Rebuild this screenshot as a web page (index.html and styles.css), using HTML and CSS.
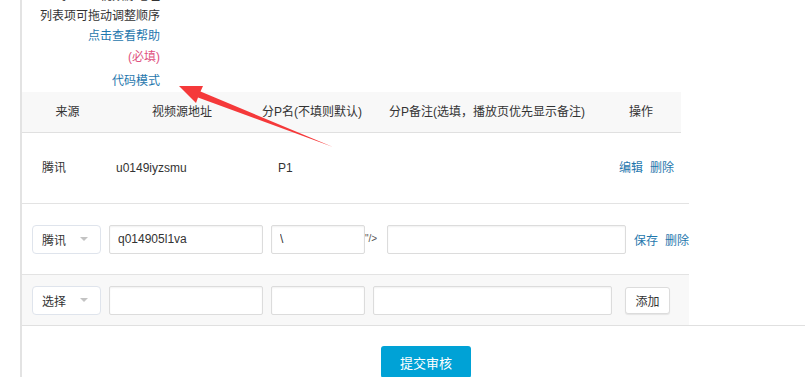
FILE: index.html
```html
<!DOCTYPE html>
<html lang="zh">
<head>
    <meta charset="UTF-8">
    <title>视频源</title>
    <link rel="stylesheet" href="styles.css">
</head>
<body>
    <div class="page">
        <div class="labels">
            <div class="label">每P一个视频源地址</div>
            <div class="label">列表项可拖动调整顺序</div>
            <div class="label link">点击查看帮助</div>
            <div class="label required">(必填)</div>
            <div class="label link mode">代码模式</div>
        </div>

        <div class="thead">
            <div class="th c1">来源</div>
            <div class="th c2">视频源地址</div>
            <div class="th c3">分P名(不填则默认)</div>
            <div class="th c4">分P备注(选填，播放页优先显示备注)</div>
            <div class="th c5">操作</div>
        </div>

        <div class="row data">
            <div class="td d1">腾讯</div>
            <div class="td d2">u0149iyzsmu</div>
            <div class="td d3">P1</div>
            <div class="td d4"><a class="act">编辑</a><a class="act">删除</a></div>
        </div>

        <div class="row edit">
            <div class="select"><span>腾讯</span><i class="caret"></i></div>
            <input class="field f-url" value="q014905l1va">
            <input class="field f-name" value="\">
            <span class="junk">"/&gt;</span>
            <input class="field f-note">
            <a class="act">保存</a><a class="act">删除</a>
        </div>

        <div class="add-wrap">
            <div class="row add">
                <div class="select"><span>选择</span><i class="caret"></i></div>
                <input class="field f-url">
                <input class="field f-name">
                <input class="field f-note2">
                <button class="add-btn">添加</button>
            </div>
        </div>

        <div class="submit-row">
            <button class="submit">提交审核</button>
        </div>

        <svg class="arrow" width="805" height="377" viewBox="0 0 805 377">
            <polygon points="179,86 203,86 200.5,91.5 333,147 198,97.5 196,103" fill="#f5393a"/>
        </svg>
    </div>
</body>
</html>
```

FILE: styles.css
```css
html, body {
    height: 100%;
}

body {
    margin: 0;
    font-family: "Liberation Sans", "Noto Sans CJK SC", sans-serif;
    font-size: 12px;
    color: #333;
    overflow: hidden;
}

.page {
    position: relative;
    display: flow-root;
    margin-left: 20px;
    border-left: 2px solid #e3e3e3;
    height: 100%;
}

.labels {
    width: 138px;
    margin-top: -14px;
    text-align: right;
}

.label {
    height: 20px;
    line-height: 20px;
}

.link {
    color: #1f77ad;
}

.required {
    color: #e0517f;
    margin-top: 1px;
}

.mode {
    margin-top: 4px;
}

.thead {
    display: flex;
    width: 659px;
    height: 40px;
    margin-top: 1px;
    background: #f8f8f8;
    border-bottom: 1px solid #e0e0e0;
}

.th {
    line-height: 40px;
    text-align: center;
}

.c1 { width: 91px; }
.c2 { width: 138px; }
.c3 { width: 122px; }
.c4 { width: 228px; }
.c5 { width: 80px; }

.row {
    display: flex;
    align-items: center;
    width: 667px;
    border-bottom: 1px solid #e3e3e3;
    white-space: nowrap;
}

.row > * {
    flex-shrink: 0;
}

.data {
    height: 70px;
}

.td {
    line-height: 20px;
}

.d1 { width: 74px; padding-left: 20px; }
.d2 { width: 162px; }
.d3 { width: 341px; }

.act {
    color: #1f77ad;
    margin-right: 7px;
    cursor: pointer;
}

.edit {
    height: 70px;
    padding-left: 10px;
    width: 657px;
}

.select {
    display: flex;
    align-items: center;
    box-sizing: border-box;
    width: 69px;
    height: 29px;
    padding-left: 9px;
    margin-right: 8px;
    border: 1px solid #dfe4ec;
    border-radius: 4px;
    background: #fff;
}

.select span {
    width: 38px;
}

.caret {
    width: 0;
    height: 0;
    border-left: 4px solid transparent;
    border-right: 4px solid transparent;
    border-top: 4px solid #c3c3c3;
}

.field {
    box-sizing: border-box;
    height: 29px;
    padding: 0 8px;
    margin: 0 8px 0 0;
    border: 1px solid #dcdcdc;
    border-radius: 2px;
    box-shadow: inset 0 1px 2px rgba(0, 0, 0, 0.06);
    font-family: "Liberation Sans", "Noto Sans CJK SC", sans-serif;
    font-size: 12px;
    color: #333;
    outline: none;
}

.f-url { width: 154px; }
.f-name { width: 94px; }
.f-note { width: 239px; }
.f-note2 { width: 239px; margin-right: 13px; }

.edit .f-name {
    margin-right: 0;
}

.junk {
    width: 22px;
    font-size: 10px;
    color: #555;
    margin-top: -2px;
}

.add-wrap {
    border-bottom: 1px solid #e0e0e0;
}

.add {
    height: 50px;
    background: #f8f8f8;
    border-bottom: none;
    padding-left: 10px;
    width: 657px;
}

.add-btn {
    box-sizing: border-box;
    width: 45px;
    height: 27px;
    padding: 0;
    border: 1px solid #dcdcdc;
    border-radius: 3px;
    background: #fff;
    box-shadow: 0 1px 1px rgba(0, 0, 0, 0.08);
    font-family: "Liberation Sans", "Noto Sans CJK SC", sans-serif;
    font-size: 12px;
    color: #333;
}

.submit-row {
    padding: 20px 0 0 359px;
}

.submit {
    width: 90px;
    height: 32px;
    border: none;
    border-radius: 3px;
    background: #00a2d6;
    color: #fff;
    font-family: "Liberation Sans", "Noto Sans CJK SC", sans-serif;
    font-size: 13px;
}

.arrow {
    position: absolute;
    top: 0;
    left: -22px;
    pointer-events: none;
}
```
